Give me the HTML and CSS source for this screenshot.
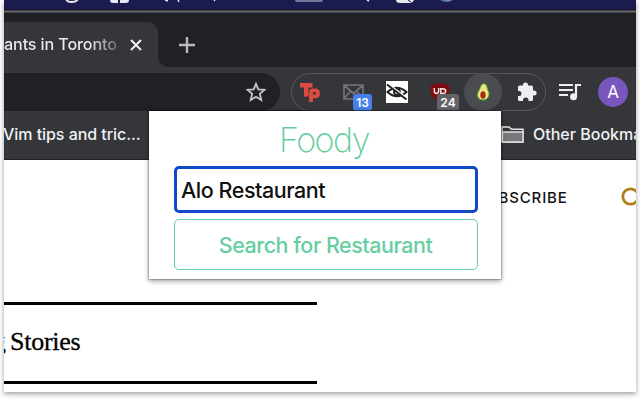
FILE: index.html
```html
<!DOCTYPE html>
<html lang="en">
<head>
<meta charset="utf-8">
<title>Foody</title>
<link rel="stylesheet" href="styles.css">
</head>
<body>
<div class="window">
  <div class="menubar">
    <svg width="632" height="11" viewBox="4 0 632 11" fill="none" stroke="#e8e8f2">
      <path d="M66-1C67 3 76 3 78-1" stroke-width="1.8"/>
      <path d="M110 0H118V3H113Q110 3 110 0ZM120 0H129Q129 3 126 3H120Z" fill="#e8e8f2" stroke="none"/>
      <path d="M165 0l3 1M178 0l1 2M215 0l-1 1M367 0l2 1" stroke-width="1.5"/>
      <path d="M295 0H323Q323 2 320 2H298Q295 2 295 0Z" fill="#77779c" stroke="none"/>
      <path d="M396 0H414Q413 3 409 3H400Q396 3 396 0Z" fill="#e8e8f2" stroke="none"/>
      <path d="M408 0l3 2" stroke="#1c1b4b"/>
      <path d="M440 0H453Q447 4 440 0Z" fill="#507bb5" stroke="none"/>
      <path d="M447 0h3v1h-3z" fill="#d36a90" stroke="none"/>
    </svg>
  </div>
  <div class="tabs">
    <div class="tab"><span class="tab-title">ants in Toronto</span>
      <svg width="14" height="14" viewBox="0 0 14 14"><path d="M2 2L12 12M12 2L2 12" stroke="#f1f3f4" stroke-width="2"/></svg>
    </div>
    <div class="strip"><svg width="18" height="18" viewBox="0 0 18 18"><path d="M9 1V17M1 9H17" stroke="#b9babd" stroke-width="2.4"/></svg></div>
  </div>
  <div class="toolbar">
    <div class="omnibox"><svg width="20" height="20" viewBox="0 0 20 20"><path d="M10 1.8L12.3 7.4 18.5 7.9 13.8 11.9 15.3 18 10 14.7 4.7 18 6.2 11.9 1.5 7.9 7.7 7.4Z" fill="none" stroke="#c4c6ca" stroke-width="1.8"/></svg></div>
    <div class="extensions">
      <span class="ext tp"><svg width="22" height="20" viewBox="0 0 22 20"><path d="M1 1H13.5V5.5H9.5V14.5H5V5.5H1Z" fill="#dc4a41"/><path d="M12 20V10.5Q12 8.4 14 8.4H16Q19 8.4 19 11.4T16 14.4H12" fill="none" stroke="#dc4a41" stroke-width="3.8"/></svg></span>
      <span class="ext mail"><svg width="21" height="16" viewBox="0 0 21 16"><path d="M1 1H20V15H1ZM1 1L10.5 9.5 20 1M1 15L7.5 7M20 15L13.5 7" fill="none" stroke="#737477" stroke-width="1.7"/></svg><b class="badge blue">13</b></span>
      <span class="ext eye"><svg width="22" height="22" viewBox="0 0 22 22"><path d="M0 0H22V22H0Z" fill="#fff"/><path d="M1.5 11Q11 2.5 20.5 11Q11 19.5 1.5 11Z" fill="none" stroke="#222" stroke-width="2"/><circle cx="11" cy="11" r="3" fill="none" stroke="#222" stroke-width="1.8"/><path d="M2 3L21.5 18" stroke="#fff" stroke-width="2"/><path d="M1 3.5L20.5 18.5" stroke="#222" stroke-width="2"/></svg></span>
      <span class="ext shield"><svg width="20" height="21" viewBox="0 0 20 21"><path d="M10 .5Q14 3 19.5 3V10Q19 16 10 20.5 1 16 .5 10V3Q6 3 10 .5Z" fill="#7d0d0f"/><path d="M4.3 6V8.5Q4.3 11.5 6.5 11.5T8.7 8.5V6M10.8 14V6.7H12.5Q15.7 6.7 15.7 9.1T12.5 11.5H10.8" fill="none" stroke="#f3e6e6" stroke-width="1.5"/></svg><b class="badge gray">24</b></span>
      <span class="ext active"><svg width="14" height="18" viewBox="0 0 14 18"><path d="M8 .7C11 .7 10.7 4.7 12 7.2 14.2 11 13 17 7 17 1.3 17 .3 11.5 2.7 8 4.5 5.2 4.6 .7 8 .7Z" fill="#e9e984" stroke="#58a51b" stroke-width="1"/><ellipse cx="7" cy="12" rx="2.7" ry="3.8" fill="#a52f16"/></svg></span>
      <span class="ext puzzle"><svg width="20" height="20" viewBox="0 0 20 20"><path d="M1 5Q1 3.5 2.5 3.5H6V3Q6 .5 8.5 .5T11 3V3.5H14.5Q16 3.5 16 5V8.5H17Q19.6 8.5 19.6 11T17 13.5H16V17.5Q16 19 14.5 19H11.5V18Q11.5 15.5 8.8 15.5T6 18V19H2.5Q1 19 1 17.5V14H2Q4.5 14 4.5 11.5T2 9H1Z" fill="#eeeff2"/></svg></span>
    </div>
    <svg class="media" width="22" height="18" viewBox="0 0 22 18"><path d="M0 2H14M0 7H14M0 12H9" stroke="#eeeff2" stroke-width="2"/><circle cx="14.5" cy="13.8" r="3.5" fill="#eeeff2"/><path d="M17 14V2H22" fill="none" stroke="#eeeff2" stroke-width="2.2"/></svg>
    <div class="avatar">A</div>
  </div>
  <div class="bookmarks">
    <span class="vim">Vim tips and tric...</span>
    <svg class="folder" width="23" height="19" viewBox="0 0 23 19"><path d="M1 17V2H8L10.5 4.2H22V17Z" fill="#333438" stroke="#e3e4e6" stroke-width="1.5"/><path d="M1.5 7H22V17H1.5Z" fill="#77787b" stroke="#e3e4e6" stroke-width="1.3"/></svg>
    <span class="other">Other Bookmarks</span>
  </div>
  <div class="page">
    <div class="nav"><span>SUBSCRIBE</span><svg width="19" height="19" viewBox="0 0 19 19"><circle cx="9.5" cy="9.5" r="7.7" fill="none" stroke="#ad8019" stroke-width="2.8"/></svg></div>
    <div class="stories"><i>g</i><span>Stories</span></div>
  </div>
  <div class="popup">
    <h1>Foody</h1>
    <div class="field"><span>Alo Restaurant</span></div>
    <div class="button"><span>Search for Restaurant</span></div>
  </div>
</div>
</body>
</html>
```
FILE: styles.css
```css
* { box-sizing: border-box; }
body { margin: 0; width: 640px; height: 400px; overflow: hidden; background: #fff; font-family: Inter, "Liberation Sans", sans-serif; }
svg { display: block; flex: none; }
.window { position: relative; width: 632px; height: 392px; margin-left: 4px; background: #fff; box-shadow: 0 2px 5px rgba(0,0,0,.38); }
.menubar, .tabs, .toolbar, .bookmarks, .page { width: 632px; overflow: hidden; white-space: nowrap; }
.menubar { height: 13px; background: linear-gradient(#1c1b50 0 9px, #111 10px, #66676a 11px 12px, #202124 13px); }
.tabs { height: 60px; padding-top: 9px; display: flex; background: linear-gradient(#202124 0 54px, #35363a 54px); }
.tab { width: 154px; height: 51px; background: #35363a; border-radius: 0 10px 0 0; display: flex; align-items: flex-start; padding-top: 12px; }
.tab-title { width: 114px; height: 24px; margin: -2px 11px 0 0; overflow: hidden; font: 450 16.2px/24px Inter, sans-serif; letter-spacing: -.15px; background: linear-gradient(90deg, #eceef0 75%, #68696d 100%); -webkit-background-clip: text; background-clip: text; color: transparent; }
.tab svg { margin-top: 4px; }
.strip { width: 478px; height: 45px; border-bottom-left-radius: 11px; background: #202124; padding: 14px 0 0 20px; box-shadow: -8px 8px 0 #35363a; }
.toolbar { height: 38px; background: #35363a; display: flex; align-items: center; }
.omnibox { width: 276px; height: 38px; background: #202124; border-radius: 0 19px 19px 0; padding: 9px 0 0 242px; }
.extensions { width: 255px; height: 38px; margin-left: 11px; border: 1px solid #55565a; border-radius: 19px; display: flex; align-items: center; padding-left: 7px; }
.ext { position: relative; width: 43px; height: 38px; display: flex; align-items: center; flex: none; }
.mail { padding-left: 1px; }
.eye { padding-left: 1px; }
.shield { padding-left: 2px; }
.active { width: 38px; margin-left: -7px; border-radius: 50%; background: #4b4c4f; justify-content: center; }
.puzzle { margin-left: 15px; width: 21px; }
.badge { position: absolute; height: 17px; border-radius: 3px; color: #fff; font: 600 12px/17px Inter, sans-serif; text-align: center; width: 19px; left: 11px; top: 21px; }
.blue { background: #477feb; }
.gray { background: #626366; width: 22px; left: 9px; }
.media { margin-left: 13px; }
.avatar { width: 30px; height: 30px; border-radius: 50%; margin-left: 17px; background: #7956bd; color: #fff; font: 17px/31px Inter, sans-serif; text-align: center; flex: none; }
.bookmarks { height: 49px; background: #35363a; border-bottom: 1px solid #222327; display: flex; align-items: center; color: #f0f1f3; font-size: 16px; font-weight: 450; }
.vim { width: 497px; flex: none; letter-spacing: -.05px; text-indent: -1px; }
.vim, .other { position: relative; top: -1px; }
.folder { margin-top: -2px; }
.other { margin-left: 9px; flex: none; }
.page { height: 232px; }
.nav { height: 75px; padding-left: 472px; display: flex; align-items: center; font-size: 15px; font-weight: 450; letter-spacing: .85px; color: #111; }
.nav span { width: 145px; flex: none; }
.nav svg { margin-top: -3px; }
.stories { width: 313px; height: 82px; margin-top: 67px; border: solid #000; border-width: 3px 0; display: flex; align-items: center; font: 26px/30px "Liberation Serif", serif; color: #000; padding-bottom: 3px; }
.stories i { width: 2px; margin-right: 4px; overflow: hidden; font-style: normal; direction: rtl; }
.stories span { letter-spacing: -.25px; -webkit-text-stroke: .3px #000; }
.popup { position: absolute; left: 145px; top: 111px; width: 352px; height: 168px; padding: 10px 23px 0 25px; background: #fff; box-shadow: 0 -1px 0 rgba(0,0,0,.4), 0 0 1px 1px rgba(0,0,0,.18), 0 2px 5px rgba(0,0,0,.4); }
h1 { margin: 0; height: 45px; text-align: center; color: #5fcd9c; font: 200 34px/38px Inter, sans-serif; letter-spacing: -1.5px; text-indent: -4px; }
.field { height: 47px; border: 3px solid #1048c8; border-radius: 5px; padding-left: 4px; color: #111; font-size: 21.5px; font-weight: 450; letter-spacing: -.45px; line-height: 42px; }
.button { height: 51px; margin-top: 6px; border: 1px solid #66ce9f; border-radius: 5px; color: #65ce9f; text-align: center; font-size: 21.5px; font-weight: 450; letter-spacing: -.48px; text-indent: -1px; line-height: 50px; }
```
